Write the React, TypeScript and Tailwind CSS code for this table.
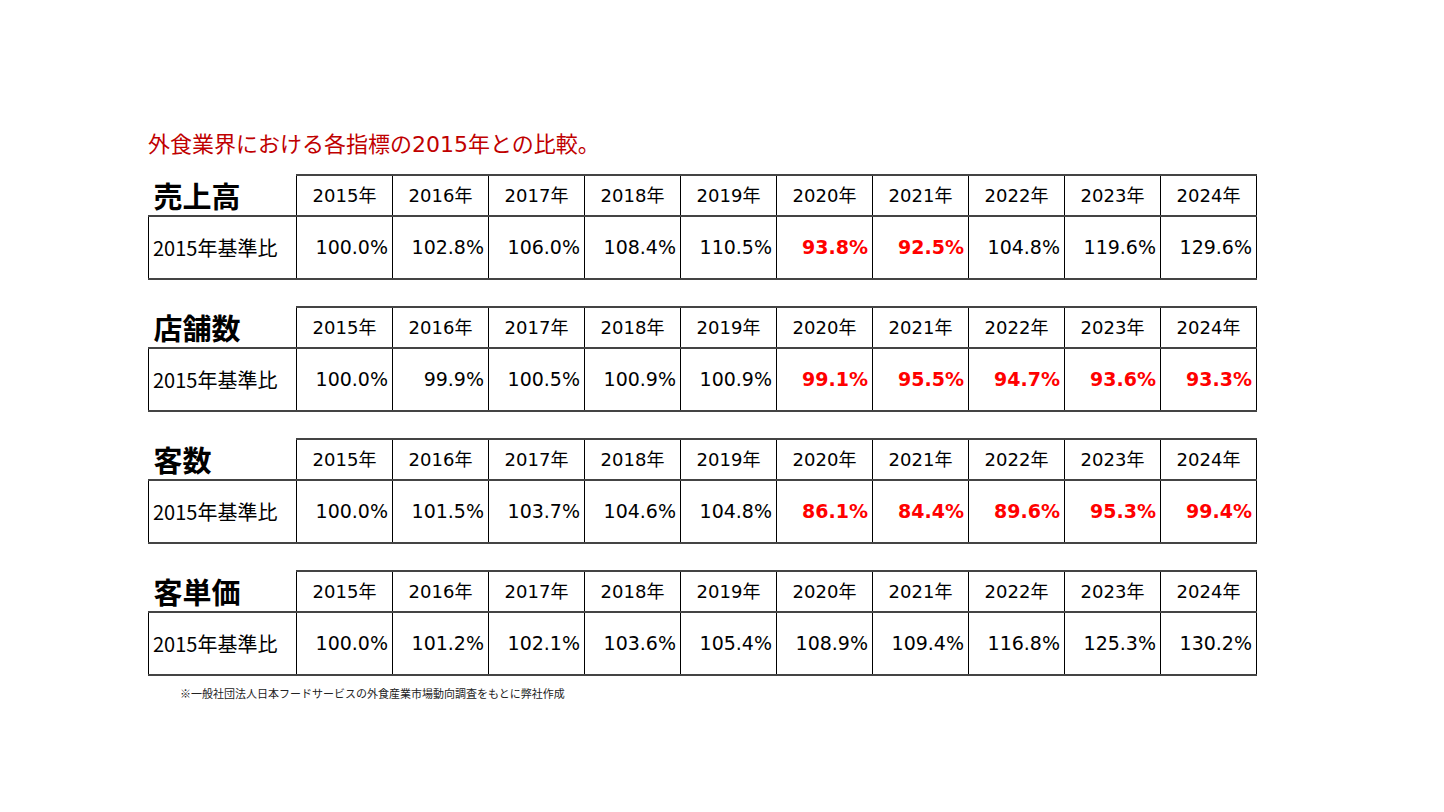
type Row = { name: string; values: string[]; red: number[] };

const years = ['2015', '2016', '2017', '2018', '2019', '2020', '2021', '2022', '2023', '2024'];

const rows: Row[] = [
  {
    name: '売上高',
    values: ['100.0%', '102.8%', '106.0%', '108.4%', '110.5%', '93.8%', '92.5%', '104.8%', '119.6%', '129.6%'],
    red: [5, 6],
  },
  {
    name: '店舗数',
    values: ['100.0%', '99.9%', '100.5%', '100.9%', '100.9%', '99.1%', '95.5%', '94.7%', '93.6%', '93.3%'],
    red: [5, 6, 7, 8, 9],
  },
  {
    name: '客数',
    values: ['100.0%', '101.5%', '103.7%', '104.6%', '104.8%', '86.1%', '84.4%', '89.6%', '95.3%', '99.4%'],
    red: [5, 6, 7, 8, 9],
  },
  {
    name: '客単価',
    values: ['100.0%', '101.2%', '102.1%', '103.6%', '105.4%', '108.9%', '109.4%', '116.8%', '125.3%', '130.2%'],
    red: [],
  },
];

const jp = { fontFamily: '"Noto Sans CJK JP", "Noto Sans", sans-serif' };
const num = { fontFamily: '"DejaVu Sans", "Noto Sans CJK JP", sans-serif' };

const cell = 'border-x border-y-2 border-x-black border-y-[#444]';

function IndexTable({ row }: { row: Row }) {
  return (
    <table className="table-fixed border-collapse w-[1108px] text-black">
      <colgroup>
        <col className="w-[148px]" />
        {years.map((y) => (
          <col key={y} className="w-[96px]" />
        ))}
      </colgroup>
      <tbody>
        <tr className="h-[41px]">
          <th className="text-left pl-[5px] text-[29px] font-bold leading-none" style={jp}>
            {row.name}
          </th>
          {years.map((y) => (
            <td key={y} className={`${cell} p-0 text-center text-[18px] font-normal leading-none`} style={num}>
              {y}年
            </td>
          ))}
        </tr>
        <tr className="h-[63px]">
          <td className={`${cell} p-0 text-left pl-[4px] text-[20px] leading-none`} style={jp}>
            2015年基準比
          </td>
          {row.values.map((v, i) =>
            row.red.includes(i) ? (
              <td key={i} className={`${cell} p-0 text-right pr-[4px] text-[19px] font-bold leading-none text-[#ff0000]`} style={num}>
                {v}
              </td>
            ) : (
              <td key={i} className={`${cell} p-0 text-right pr-[4px] text-[19px] leading-none`} style={num}>
                {v}
              </td>
            )
          )}
        </tr>
      </tbody>
    </table>
  );
}

export default function App() {
  return (
    <main className="w-[1444px] h-[812px] bg-white pl-[148px] pt-[132px]">
      <h1 className="text-[22px] leading-[26px] text-[#c00000] mb-[16px]" style={num}>
        外食業界における各指標の2015年との比較。
      </h1>

      <div className="flex flex-col gap-[26px]">
        {rows.map((row) => (
          <IndexTable key={row.name} row={row} />
        ))}
      </div>

      <p className="mt-[9px] ml-[32px] text-[11px] leading-[16px] text-[#222]" style={jp}>
        ※一般社団法人日本フードサービスの外食産業市場動向調査をもとに弊社作成
      </p>
    </main>
  );
}
